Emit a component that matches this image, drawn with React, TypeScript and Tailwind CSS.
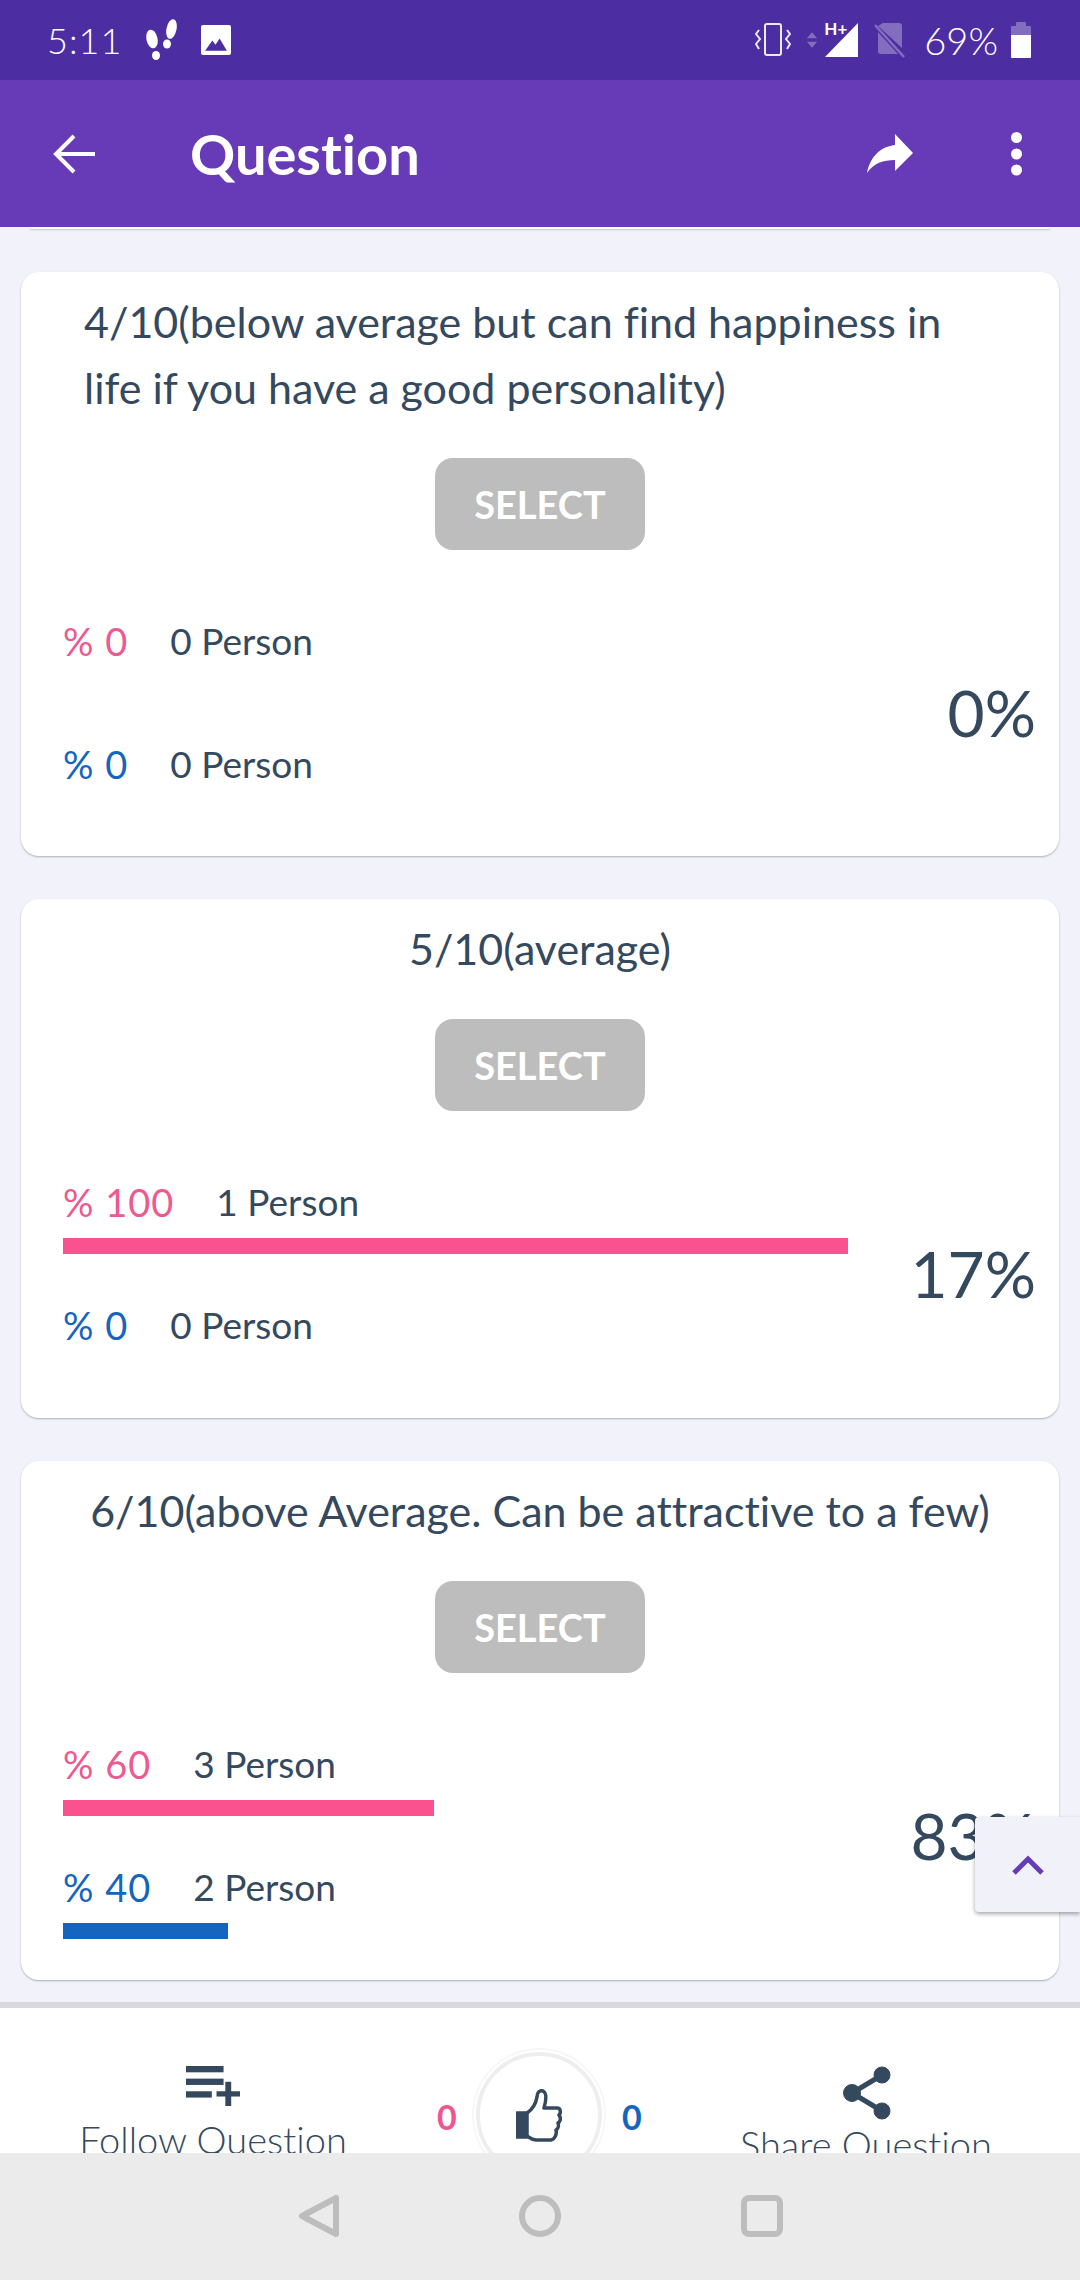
import React from "react";

const ink = "#35495e";

function Stat({ pct, count, color, bar }: { pct: number; count: number; color: "pink" | "blue"; bar: number }) {
  return (
    <div className="h-[123px]">
      <div className="flex h-[50px] items-center pb-[2px] text-[38px] leading-[48px]">
        <span className={color === "pink" ? "w-fit tracking-[1px] text-[#ec5a8f]" : "w-fit tracking-[1px] text-[#1565c0]"}>% {pct}</span>
        <span className="ml-[42px] text-[37px] text-[#35495e]">{count} Person</span>
      </div>
      {bar > 0 && (
        <div
          className={color === "pink" ? "mt-[10px] h-[16px] bg-[#f9528f]" : "mt-[10px] h-[16px] bg-[#1565c0]"}
          style={{ width: `${bar}px` }}
        />
      )}
    </div>
  );
}

function Card({
  title,
  left,
  total,
  a,
  b,
}: {
  title: string;
  left?: boolean;
  total: string;
  a: [number, number, number];
  b: [number, number, number];
}) {
  return (
    <div className="mx-[21px] h-[519px] rounded-[18px] bg-white pt-[17px] shadow-[0_1px_2px_rgba(0,0,0,0.28)] first:h-[584px]">
      <div
        className={
          left
            ? "pl-[63px] pr-[90px] text-left text-[43px] leading-[66px] text-[#35495e]"
            : "px-[20px] text-center text-[43px] leading-[66px] text-[#35495e]"
        }
      >
        {title}
      </div>
      <div className="mt-[37px] flex justify-center">
        <div className="flex h-[92px] w-[210px] items-center justify-center rounded-[18px] bg-[#bdbdbd] text-[38px] font-bold text-white">
          SELECT
        </div>
      </div>
      <div className="mt-[67px] flex items-center pl-[42px] pr-[23px]">
        <div className="w-[785px] flex-none">
          <Stat pct={a[0]} count={a[1]} color="pink" bar={a[2]} />
          <Stat pct={b[0]} count={b[1]} color="blue" bar={b[2]} />
        </div>
        <div className="flex-1 pb-[54px] text-right text-[64px] leading-none text-[#35495e]">{total}</div>
      </div>
    </div>
  );
}

function StatusBar() {
  return (
    <div className="flex h-[80px] items-center bg-[#4d2ea2] pl-[47px] pr-[49px] text-white">
      <span className="w-[67px] flex-none text-[36px] font-light leading-none tracking-[1px]">5:11</span>
      <svg width="34" height="42" viewBox="0 0 34 42" className="ml-[31px]" fill="white">
        <ellipse cx="7" cy="20" rx="5.5" ry="9.5" transform="rotate(-12 7 20)" />
        <ellipse cx="11" cy="36.5" rx="4" ry="4.5" />
        <ellipse cx="26.5" cy="10" rx="5" ry="10" transform="rotate(12 26.5 10)" />
        <ellipse cx="22" cy="25" rx="4" ry="4.5" />
      </svg>
      <svg width="30" height="30" viewBox="0 0 29 29" className="ml-[22px]">
        <rect width="29" height="29" rx="2" fill="white" />
        <path d="M4 25 L11 15 L14 19 L18 13 L25 25 Z" fill="#4d2ea2" />
      </svg>
      <div className="flex-1" />
      <svg width="36" height="34" viewBox="0 0 36 34" fill="none" stroke="white" strokeWidth="2" className="opacity-90">
        <rect x="10" y="1" width="16" height="31" rx="2" />
        <path d="M4 7 L1 11 L5 16 L1 21 L4 26" />
        <path d="M32 7 L35 11 L31 16 L35 21 L32 26" />
      </svg>
      <svg width="12" height="20" viewBox="0 0 14 20" fill="white" className="ml-[15px] opacity-30">
        <path d="M7 1 L13 8 H1 Z M1 12 H13 L7 19 Z" />
      </svg>
      <div className="relative ml-[6px] h-[36px] w-[35px]">
        <svg width="35" height="36" viewBox="0 0 35 36" fill="white" className="absolute left-0 top-0">
          <path d="M34 1 V35 H1 Z" />
        </svg>
        <span className="absolute left-0 top-[-3px] text-[17px] font-bold leading-[20px] text-white">H+</span>
      </div>
      <svg width="32" height="36" viewBox="0 0 32 36" className="ml-[15px]" fill="white" fillOpacity="0.3">
        <path d="M9 1 H25 Q28 1 28 4 V26 L4 4 Z M4 10 L24 32 H7 Q4 32 4 29 Z" />
        <path d="M1 3 L30 35" stroke="white" strokeOpacity="0.3" strokeWidth="2.5" />
      </svg>
      <span className="ml-[18px] text-[38px] font-light leading-none">69%</span>
      <div className="ml-[13px] flex h-[36px] w-[20px] flex-col items-center">
        <div className="h-[4px] w-[10px] rounded-t-[1px] bg-white/30" />
        <div className="h-[9px] w-[20px] rounded-t-[1px] bg-white/30" />
        <div className="w-[20px] flex-1 rounded-b-[1px] bg-white" />
      </div>
    </div>
  );
}

function AppBar() {
  return (
    <div className="flex h-[147px] items-center bg-[#673ab7] text-white">
      <svg width="42" height="42" viewBox="0 0 42 42" fill="none" stroke="white" strokeWidth="4" className="ml-[53px]">
        <path d="M42 21 H3 M21 3 L3 21 L21 39" />
      </svg>
      <span className="ml-[95px] text-[56px] font-bold leading-none">Question</span>
      <div className="flex-1" />
      <svg width="46" height="40" viewBox="0 0 46 40" fill="white">
        <path d="M28 0 L46 19 L28 37 V26 C16 26 7 29 0 39 C3 24 12 13 28 11 Z" />
      </svg>
      <svg width="11" height="44" viewBox="0 0 11 44" fill="white" className="ml-[98px] mr-[58px]">
        <circle cx="5.5" cy="5.5" r="5.5" />
        <circle cx="5.5" cy="22" r="5.5" />
        <circle cx="5.5" cy="38" r="5.5" />
      </svg>
    </div>
  );
}

function BottomBar() {
  return (
    <div className="relative h-[151px] flex-none overflow-hidden border-t-[6px] border-[#d8d8de] bg-white">
      <div className="flex h-full">
        <div className="flex w-[426px] flex-none flex-col items-center pt-[58px]">
          <svg width="54" height="40" viewBox="0 0 46 38" preserveAspectRatio="none" fill={ink} className="flex-none">
            <rect x="0" y="0" width="32" height="6" />
            <rect x="0" y="12" width="32" height="6" />
            <rect x="0" y="24" width="22" height="6" />
            <rect x="26" y="24" width="20" height="5" />
            <rect x="33.5" y="15" width="5" height="23" />
          </svg>
          <span className="mt-[10px] flex-none whitespace-nowrap text-[38px] font-light leading-[46px] text-[#35495e]">Follow Question</span>
        </div>
        <div className="relative flex-1">
          <span className="absolute left-[11px] top-[89px] text-[34px] font-bold leading-[40px] text-[#f0558f]">0</span>
          <div className="absolute left-[46px] top-[40px] h-[134px] w-[134px] rounded-full border-[2px] border-[#f7f7f7] p-[2px]">
            <div className="flex h-full w-full items-start justify-center rounded-full border-[4px] border-[#eeeeee] pt-[33px]">
              <svg width="46" height="54" viewBox="0 0 46 54" fill="none" stroke={ink} strokeWidth="3.5" strokeLinejoin="round">
                <path d="M1 24 H11 V48 H1 Z" fill={ink} />
                <path d="M11 24 C17 20 20 14 21 8 C21 3 24 1 27 2 C31 4 30 12 28 19 H41 C45 19 45 24 43 26 C45 29 45 32 42 34 C43 37 42 40 40 41 C41 45 39 50 35 51 H20 C16 51 14 49 11 47" />
              </svg>
            </div>
          </div>
          <span className="absolute left-[196px] top-[89px] text-[34px] font-bold leading-[40px] text-[#1565c0]">0</span>
        </div>
        <div className="flex w-[426px] flex-none flex-col items-center pt-[58px]">
          <svg width="48" height="54" viewBox="0 0 48 54" fill={ink} stroke={ink} className="flex-none">
            <circle cx="39" cy="9" r="8" />
            <circle cx="9" cy="27" r="8.5" />
            <circle cx="39" cy="45" r="8" />
            <path d="M39 9 L9 27 L39 45" fill="none" strokeWidth="5" />
          </svg>
          <span className="ml-[-2px] mt-[1px] flex-none whitespace-nowrap text-[38px] font-light leading-[46px] text-[#35495e]">Share Question</span>
        </div>
      </div>
    </div>
  );
}

function NavBar() {
  return (
    <div className="flex h-[127px] flex-none items-center justify-center gap-[180px] bg-[#ebebeb] pb-[2px]">
      <svg width="42" height="44" viewBox="0 0 42 44" fill="none" stroke="#bdbdbd" strokeWidth="6" strokeLinejoin="round" className="translate-x-[1px]">
        <path d="M38 4 V40 L4 22 Z" />
      </svg>
      <svg width="42" height="44" viewBox="0 0 42 44" fill="none" stroke="#bdbdbd" strokeWidth="6">
        <circle cx="21" cy="22" r="18" />
      </svg>
      <svg width="42" height="44" viewBox="0 0 42 44" fill="none" stroke="#bdbdbd" strokeWidth="6">
        <rect x="3" y="4" width="36" height="36" rx="5" />
      </svg>
    </div>
  );
}

export default function App() {
  return (
    <div
      className="relative flex h-[2280px] w-[1080px] flex-col overflow-hidden bg-[#f1f2fa] [font-variant-ligatures:none]"
      style={{ fontFamily: "Lato, sans-serif" }}
    >
      <StatusBar />
      <AppBar />
      <div className="min-h-0 flex-1 overflow-hidden">
        <div className="mx-[30px] mb-[43px] h-[2px] rounded-b-[8px] bg-white shadow-[0_1px_2px_rgba(0,0,0,0.2)]" />
        <div className="flex flex-col gap-[43px]">
          <Card
            left
            title="4/10(below average but can find happiness in life if you have a good personality)"
            total="0%"
            a={[0, 0, 0]}
            b={[0, 0, 0]}
          />
          <Card title="5/10(average)" total="17%" a={[100, 1, 785]} b={[0, 0, 0]} />
          <Card title="6/10(above Average. Can be attractive to a few)" total="83%" a={[60, 3, 371]} b={[40, 2, 165]} />
        </div>
      </div>
      <BottomBar />
      <NavBar />
      <div className="absolute left-[975px] top-[1817px] flex h-[95px] w-[105px] items-center justify-center rounded-l-[4px] bg-[#f1f1f9] shadow-[0_2px_4px_rgba(0,0,0,0.35)]">
        <svg width="32" height="20" viewBox="0 0 32 20" fill="none" stroke="#673ab7" strokeWidth="5">
          <path d="M2 18 L16 4 L30 18" />
        </svg>
      </div>
    </div>
  );
}
